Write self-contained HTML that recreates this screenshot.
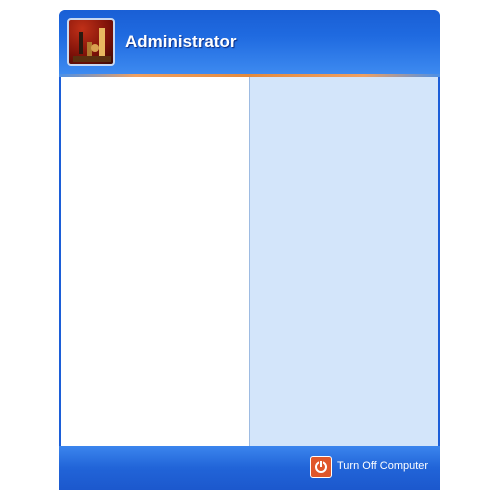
<!DOCTYPE html>
<html><head><style>
body{margin:0;width:500px;height:500px;background:#fff;position:relative;overflow:hidden;font-family:"Liberation Sans",Tahoma,sans-serif}
.win{position:absolute;left:59px;top:10px;width:381px;height:480px;background:#1c5ed8;border-radius:6px 6px 0 0;overflow:hidden}
.hdr{position:absolute;left:0;top:0;width:381px;height:64px;background:linear-gradient(#1a5fd5 0%,#1f6ae0 40%,#3d8af0 100%);border-radius:6px 6px 0 0}
.line{position:absolute;left:0;top:64px;width:381px;height:3px;background:linear-gradient(90deg,#4a8fe8,#f0a060 20%,#e48a3c 50%,#f0a060 80%,#4a8fe8)}
.left{position:absolute;left:2px;top:67px;width:188px;height:369px;background:#fff}
.right{position:absolute;left:190px;top:67px;width:188px;height:369px;background:#d3e5fa;border-left:1px solid #9dbbe2}
.ftr{position:absolute;left:0;top:436px;width:381px;height:44px;background:linear-gradient(#3b85ee,#2164d8 50%,#1c58cd)}
.pic{position:absolute;left:8px;top:8px;width:48px;height:48px;border:2px solid #c8d8f0;border-radius:4px;background:radial-gradient(circle at 30% 20%,#c03018,#7a1008 60%,#3a0a04);box-sizing:border-box}
.name{position:absolute;left:66px;top:22px;color:#fff;font-weight:bold;font-size:17px;text-shadow:1px 1px 1px #0a2a80}
.off{position:absolute;left:250px;top:447px;width:22px;height:22px;background:#e0572b;border:1px solid #fff;border-radius:3px;box-sizing:border-box}
.offt{position:absolute;left:337px;top:460px;color:#fff;font-size:11px}
</style></head><body>
<div class="win">
<div class="hdr"><div class="pic">
<svg width="44" height="44" viewBox="0 0 44 44"><rect x="10" y="12" width="4" height="22" fill="#2a1a10"/><rect x="18" y="22" width="5" height="14" fill="#b07a30"/><circle cx="26" cy="28" r="4" fill="#d8a050"/><rect x="30" y="8" width="6" height="30" fill="#e8b860"/><rect x="4" y="36" width="38" height="6" fill="#5a3010"/></svg>
</div><div class="name">Administrator</div></div>
<div class="line"></div>
<div class="left"></div>
<div class="right"></div>
<div class="ftr"></div>
</div>
<div class="off" style="left:310px;top:456px"><svg width="20" height="20" viewBox="0 0 20 20"><circle cx="10" cy="10" r="5" fill="none" stroke="#fff" stroke-width="2"/><line x1="10" y1="4" x2="10" y2="10" stroke="#e0572b" stroke-width="4"/><line x1="10" y1="4" x2="10" y2="10" stroke="#fff" stroke-width="2"/></svg></div>
<div class="offt">Turn Off Computer</div>
</body></html>
